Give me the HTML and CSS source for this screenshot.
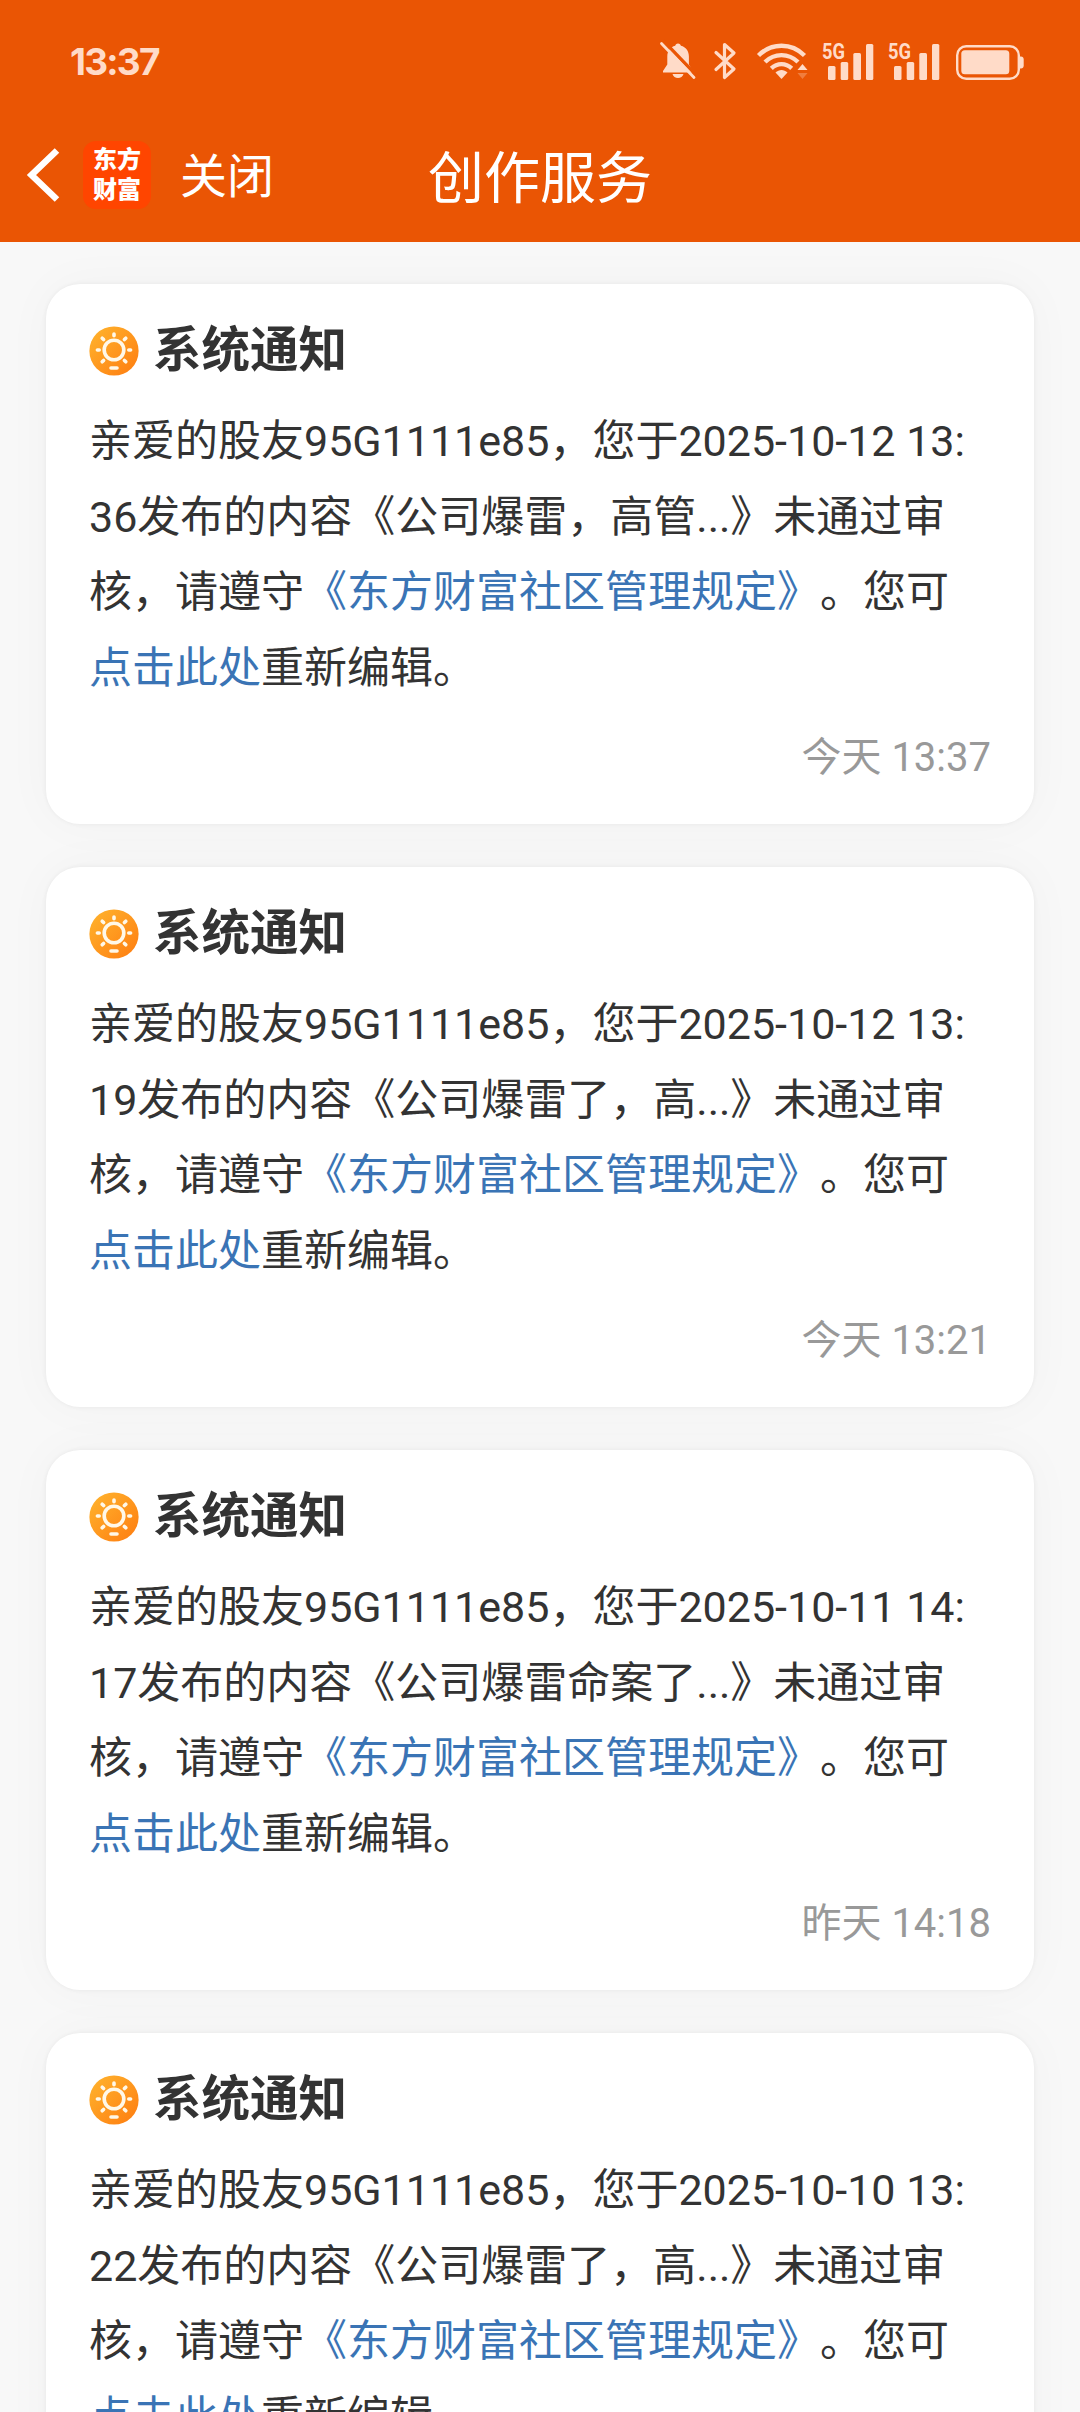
FILE: index.html
```
<!DOCTYPE html>
<html lang="zh-CN">
<head>
<meta charset="utf-8">
<title>创作服务</title>
<link rel="stylesheet" href="styles.css">
</head>
<body>
<svg width="0" height="0" class="defs">
  <defs>
    <linearGradient id="sun-fill" x1="0" y1="0" x2="1" y2="1">
      <stop offset="0" stop-color="#ffb52e"/>
      <stop offset="1" stop-color="#fe7c10"/>
    </linearGradient>
    <symbol id="sun" viewBox="0 0 50 50">
      <circle cx="25" cy="25" r="24.6" fill="url(#sun-fill)"/>
      <g fill="none" stroke="#fff8e8" stroke-width="3.6" stroke-linecap="round">
        <circle cx="25" cy="24" r="9.8"/>
        <path d="M25 8v1.800M13.200 12.200l1.400 1.400M36.800 12.200l-1.400 1.400M8.400 24h1.800M39.800 24h1.800M13.200 35.800l1.400-1.400M36.800 35.800l-1.400-1.400M22 42h6"/>
      </g>
    </symbol>
    <symbol id="signal" viewBox="0 0 54 40">
      <text x="0" y="19" class="net" textLength="23" lengthAdjust="spacingAndGlyphs">5G</text>
      <rect x="6" y="26" width="7.5" height="14" rx="1.5"/>
      <rect x="18.7" y="22" width="7.5" height="18" rx="1.5"/>
      <rect x="31.3" y="13" width="7.7" height="27" rx="1.5"/>
      <rect x="44" y="4" width="7.3" height="36" rx="1.5"/>
    </symbol>
  </defs>
</svg>
<header class="top">
  <div class="status">
    <span class="clock">13:37</span>
    <div class="status-icons">
      <svg class="mute" viewBox="0 0 36 38" width="36" height="38">
        <path d="M18 1.5c1.600 0 2.700 1 2.900 2.300 5 1.300 8 5.400 8 10.700v8l4 6.500v1.500H3v-1.500l4.300-6.500v-8c0-5.300 3-9.400 7.900-10.700.2-1.300 1.200-2.300 2.800-2.300zM12.500 32h11c-.8 2.400-2.800 4-5.500 4s-4.700-1.600-5.500-4z"/>
        <path d="M3.500 -1.200L36 32.800" stroke="#ea5504" stroke-width="3.400"/>
        <path d="M1.500 1.500L34 35.500" stroke="#ffdbc8" stroke-width="2.800" stroke-linecap="round"/>
      </svg>
      <svg class="bluetooth" viewBox="0 0 24 38" width="24" height="38">
        <path d="M3 10.500l18 16.500-9.500 8.500V2.500L21 11 3 27.500" fill="none" stroke="#ffdbc8" stroke-width="3.200" stroke-linejoin="round" stroke-linecap="round"/>
      </svg>
      <svg class="wifi" viewBox="0 0 54 38" width="54" height="38">
        <g fill="none" stroke="#ffdbc8" stroke-width="4.400">
          <path d="M2.500 13.500c13-13 33-13 46 0"/>
          <path d="M9 20c9.500-9.200 23.500-9.200 33 0"/>
          <path d="M15.300 26.300c6-5.600 14.400-5.600 20.400 0"/>
        </g>
        <path d="M19.500 30.500c3.500-3.400 8.500-3.400 12 0l-6 6.500z"/>
        <path d="M41.500 28l5-6 5 6z"/>
        <path d="M41.500 31l5 6 5-6z" opacity=".3"/>
      </svg>
      <svg class="signal" width="54" height="40"><use href="#signal"/></svg>
      <svg class="signal" width="54" height="40"><use href="#signal"/></svg>
      <svg class="battery" viewBox="-1 -1 68 36" width="68" height="36">
        <rect x="1.200" y="1.200" width="61.600" height="32.600" rx="9" fill="none" stroke="#ffdbc8" stroke-width="2.400"/>
        <rect x="5.300" y="5.300" width="48" height="24" rx="3.500"/>
        <path d="M64 11.500h1c1.600 0 2.700 1.200 2.700 3v6c0 1.800-1.100 3-2.700 3h-1z"/>
      </svg>
    </div>
  </div>
  <nav class="nav">
    <div class="nav-left">
      <svg class="back" viewBox="0 0 34 56" width="34" height="56"><path d="M31 3.500L5.500 28 31 52.500" fill="none" stroke="#fff" stroke-width="6.500"/></svg>
      <div class="logo">东方<br>财富</div>
      <span class="close">关闭</span>
    </div>
    <h1 class="title">创作服务</h1>
    <div></div>
  </nav>
</header>
<main class="list">
  <article class="card">
    <h2 class="card-title"><svg width="50" height="50"><use href="#sun"/></svg>系统通知</h2>
    <p class="message">亲爱的股友95G1111e85，您于2025-10-12 13:<br>36发布的内容《公司爆雷，高管...》未通过审<br>核，请遵守<a>《东方财富社区管理规定》</a>。您可<br><a>点击此处</a>重新编辑。</p>
    <time class="date">今天 13:37</time>
  </article>
  <article class="card">
    <h2 class="card-title"><svg width="50" height="50"><use href="#sun"/></svg>系统通知</h2>
    <p class="message">亲爱的股友95G1111e85，您于2025-10-12 13:<br>19发布的内容《公司爆雷了，高...》未通过审<br>核，请遵守<a>《东方财富社区管理规定》</a>。您可<br><a>点击此处</a>重新编辑。</p>
    <time class="date">今天 13:21</time>
  </article>
  <article class="card">
    <h2 class="card-title"><svg width="50" height="50"><use href="#sun"/></svg>系统通知</h2>
    <p class="message">亲爱的股友95G1111e85，您于2025-10-11 14:<br>17发布的内容《公司爆雷命案了...》未通过审<br>核，请遵守<a>《东方财富社区管理规定》</a>。您可<br><a>点击此处</a>重新编辑。</p>
    <time class="date">昨天 14:18</time>
  </article>
  <article class="card">
    <h2 class="card-title"><svg width="50" height="50"><use href="#sun"/></svg>系统通知</h2>
    <p class="message">亲爱的股友95G1111e85，您于2025-10-10 13:<br>22发布的内容《公司爆雷了，高...》未通过审<br>核，请遵守<a>《东方财富社区管理规定》</a>。您可<br><a>点击此处</a>重新编辑。</p>
  </article>
</main>
</body>
</html>
```
FILE: styles.css
```
* { box-sizing: border-box; margin: 0; padding: 0; }

body {
  width: 1080px;
  height: 2412px;
  overflow: hidden;
  display: flex;
  flex-direction: column;
  background: #f8f8f8;
  color: #333;
  font-family: Roboto, "Noto Sans CJK SC", sans-serif;
  text-spacing-trim: space-all;
}

svg { display: block; flex: none; overflow: visible; }
.defs { position: absolute; }

.top { flex: none; height: 242px; background: #ea5504; color: #fff; }

.status {
  height: 108px;
  padding: 16px 57px 0 70px;
  display: flex;
  justify-content: space-between;
  align-items: center;
}
.clock {
  font: 700 37px/44px Inter, sans-serif;
  letter-spacing: -1.8px;
  color: #ffdbc8;
}
.status-icons { display: flex; align-items: flex-end; height: 40px; margin-bottom: 4px; fill: #ffdbc8; }
.net { font: 700 22px Roboto, sans-serif; }
.bluetooth { margin-left: 17px; }
.wifi { margin-left: 19px; }
.signal { margin-left: 12px; }
.battery { margin-left: 13px; }

.nav {
  height: 134px;
  padding: 0 26px;
  display: grid;
  grid-template-columns: 1fr auto 1fr;
  align-items: center;
}
.nav-left { display: flex; align-items: center; }
.logo {
  width: 68px;
  height: 68px;
  margin-left: 23px;
  padding-top: 2px;
  border-radius: 13px;
  background: #ff4500;
  text-align: center;
  font: 900 24px/30px "Noto Sans CJK SC", sans-serif;
}
.close { margin-left: 29px; padding-top: 3px; font-size: 47px; line-height: 60px; }
.title { padding-top: 7px; font-size: 56px; font-weight: 400; line-height: 72px; }

.list { flex: none; padding: 42px 46px; display: flex; flex-direction: column; gap: 43px; }
.card {
  height: 540px;
  padding: 37px 43px 0;
  border-radius: 34px;
  background: #fff;
  box-shadow: 0 0 5px rgba(0, 0, 0, .06), 0 0 50px rgba(0, 0, 0, .03);
  display: flex;
  flex-direction: column;
}
.card-title {
  height: 60px;
  display: flex;
  align-items: center;
  gap: 14px;
  font-size: 48.5px;
  font-weight: 700;
  line-height: 60px;
}
.message { margin-top: 23px; font-size: 43px; line-height: 75.7px; white-space: nowrap; }
.message a { color: #3a74b5; }
.date { margin-top: 21px; align-self: flex-end; font-size: 40px; line-height: 60px; color: #999; }
```
